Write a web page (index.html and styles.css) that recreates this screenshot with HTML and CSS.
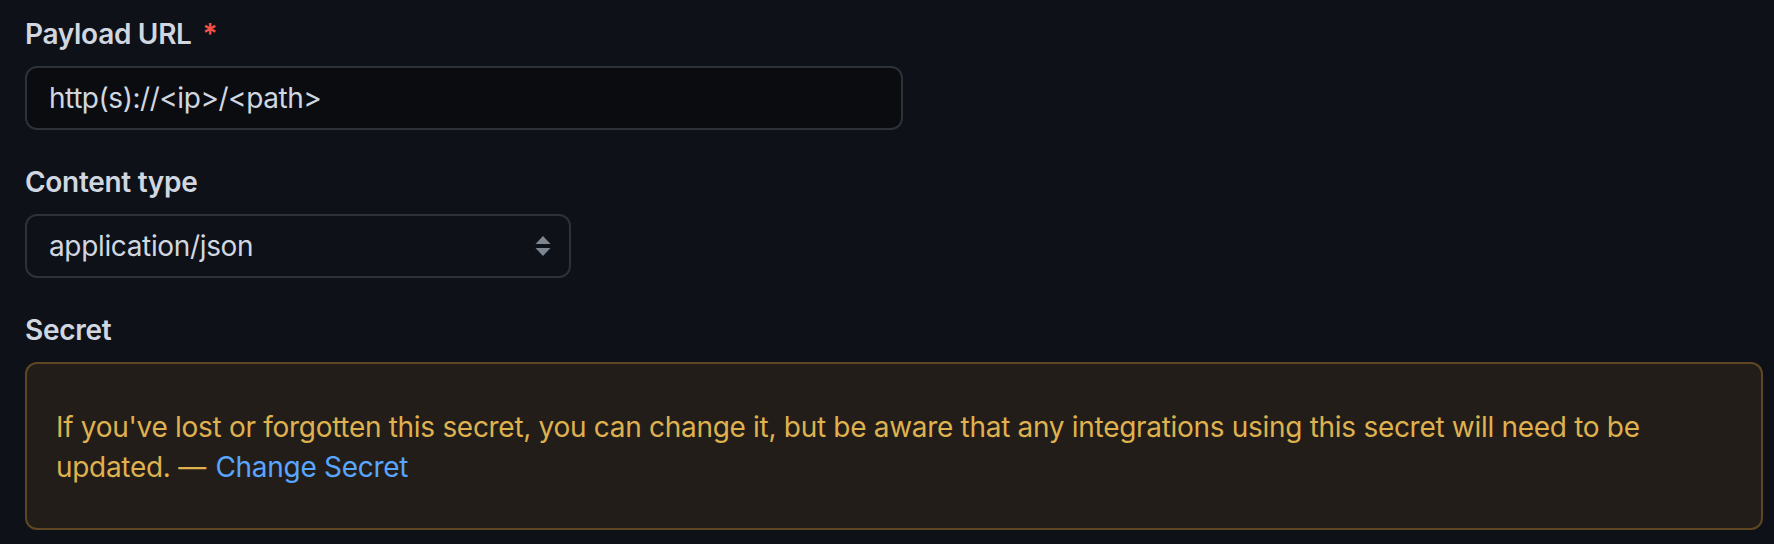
FILE: index.html
```html
<!DOCTYPE html>
<html>
<head>
<meta charset="utf-8">
<link rel="stylesheet" href="styles.css">
</head>
<body>
<div class="form">
  <div class="group">
    <label class="label">Payload URL <span class="req">*</span></label>
    <div class="input">http(s)://&lt;ip&gt;/&lt;path&gt;</div>
  </div>
  <div class="group">
    <label class="label">Content type</label>
    <div class="select">
      <span>application/json</span>
      <svg class="arrows" width="16" height="22" viewBox="0 0 16 22"><path d="M8 1 L15.5 9 L0.5 9 Z M0.5 13 L15.5 13 L8 21 Z" fill="#7d8590"/></svg>
    </div>
  </div>
  <div class="group">
    <label class="label">Secret</label>
    <div class="flash"><span>If you've lost or forgotten this secret, you can change it, but be aware that any integrations using this secret will need to be </span><span>updated. — </span><a class="link">Change Secret</a></div>
  </div>
</div>
</body>
</html>
```
FILE: styles.css
```css
html, body {
  margin: 0;
  padding: 0;
  background: #0e1117;
}
body {
  font-family: Inter, "Noto Sans", sans-serif;
  color: #d1d7e0;
}
.form {
  display: flex;
  flex-direction: column;
  gap: 32px;
  padding: 14px 11px 0 25px;
}
.group {
  display: flex;
  flex-direction: column;
  align-items: flex-start;
  gap: 12px;
}
.label {
  font-size: 28px;
  line-height: 40px;
  font-weight: 600;
  color: #d1d7e0;
  letter-spacing: -0.3px;
}
.req {
  color: #f85149;
  margin-left: 4px;
}
.input {
  box-sizing: border-box;
  width: 878px;
  height: 64px;
  border: 2px solid #2d3139;
  border-radius: 12px;
  background: #0a0c10;
  padding: 0 22px;
  display: flex;
  align-items: center;
  font-size: 28px;
  letter-spacing: -0.45px;
}
.select {
  box-sizing: border-box;
  width: 546px;
  height: 64px;
  border: 2px solid #2d3139;
  border-radius: 12px;
  background: #0e1117;
  padding: 0 18px 0 22px;
  display: flex;
  align-items: center;
  justify-content: space-between;
  font-size: 28px;
  letter-spacing: -0.35px;
}
.arrows {
  display: block;
}
.flash {
  box-sizing: border-box;
  width: 1738px;
  border: 2px solid #5e4722;
  border-radius: 12px;
  background: #221d19;
  padding: 43px 28px 41px 29px;
  font-size: 28px;
  line-height: 40px;
  color: #dfb14f;
  letter-spacing: -0.3px;
}
.link {
  color: #58a6ff;
  margin-left: 2px;
}
```
